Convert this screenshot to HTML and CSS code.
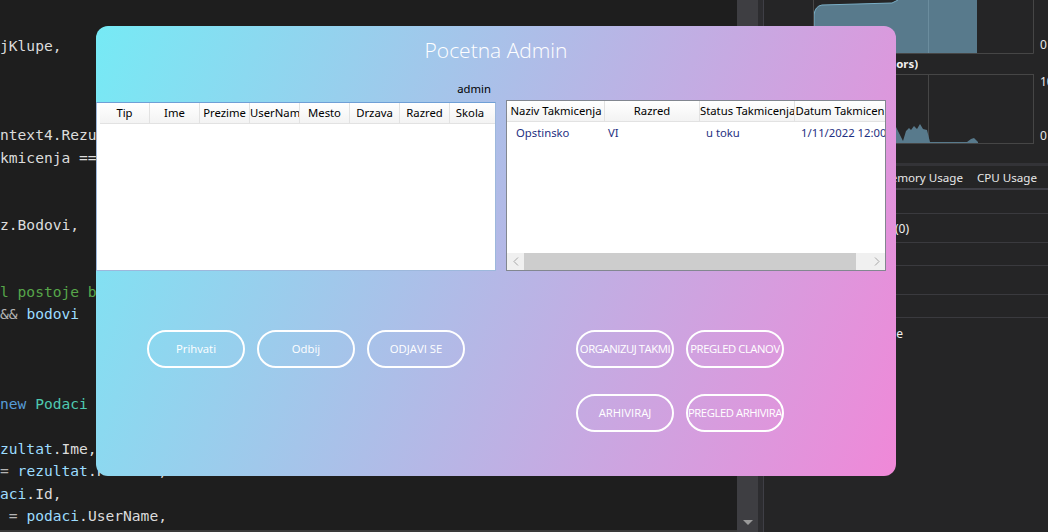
FILE: index.html
```html
<!DOCTYPE html>
<html>
<head>
<meta charset="utf-8">
<link rel="stylesheet" href="styles.css">
</head>
<body>
<div class="editor">
<div class="ln">jKlupe,</div>
<div class="ln"> </div>
<div class="ln"> </div>
<div class="ln"> </div>
<div class="ln">ntext4.Rezultati</div>
<div class="ln">kmicenja == </div>
<div class="ln"> </div>
<div class="ln"> </div>
<div class="ln">z.Bodovi,</div>
<div class="ln"> </div>
<div class="ln"> </div>
<div class="ln cm">l postoje bodovi</div>
<div class="ln"><span class="op">&amp;&amp;</span> <span class="var">bodovi</span></div>
<div class="ln"> </div>
<div class="ln"> </div>
<div class="ln"> </div>
<div class="ln"><span class="kw">new</span> <span class="ty">Podaci</span></div>
<div class="ln"> </div>
<div class="ln"><span class="var">zultat</span>.Ime,</div>
<div class="ln"><span class="op">=</span> <span class="var">rezultat</span>.Prezime,</div>
<div class="ln"><span class="var">aci</span>.Id,</div>
<div class="ln"> <span class="op">=</span> <span class="var">podaci</span>.UserName,</div>
</div>
<div class="vscroll"><span class="arrow"></span></div>
<div class="gutter"></div>
<div class="panel">
  <svg class="g1" width="284" height="54" viewBox="0 0 284 54">
    <path d="M50,53 L50,15 Q51,6 58,5 L128,3 L134,0 L213,0 L213,53 Z" fill="#587a8c"/>
    <path d="M50,53 L50,15 Q51,6 58,5 L128,3 L134,0" fill="none" stroke="#79aec6" stroke-width="1"/>
    <line x1="164.5" y1="0" x2="164.5" y2="53" stroke="#6b8d9e"/>
    <path d="M49.5,0 L49.5,53.5 L269.5,53.5 L269.5,0" fill="none" stroke="#464646"/>
  </svg>
  <span class="axis a1">0</span>
  <div class="cap">CPU (% of all processors)</div>
  <div class="g2wrap">
    <svg class="g2" width="284" height="70" viewBox="0 0 284 70">
      <rect x="49.5" y="0.5" width="220" height="69" fill="none" stroke="#464646"/>
      <line x1="164.5" y1="1" x2="164.5" y2="69" stroke="#464646"/>
      <path d="M50,69 L50,60 L120,55 L132,53 L139,67 L142,57 L145,54 L147,56 L150,52 L153,55 L156,50 L159,55 L163,56 L166,68 L203,68 L207,65 L210,64 L214,68 L214,69 Z" fill="#587a8c"/>
    </svg>
    <span class="axis a2">100</span>
    <span class="axis a3">0</span>
  </div>
  <div class="sep"></div>
  <div class="tabs"><span class="tab1">Memory Usage</span><span>CPU Usage</span></div>
  <div class="tabline"></div>
  <div class="prow h24"></div>
  <div class="prow h29"><span class="rtxt">Events (0)</span></div>
  <div class="prow h23"></div>
  <div class="prow h29"></div>
  <div class="prow h23"></div>
  <div class="prow h30 last"><span class="rtxt r2">Name</span></div>
</div>

<div class="dialog">
  <div class="title">Pocetna Admin</div>
  <div class="user">admin</div>
  <div class="tables">
    <div class="lt">
      <div class="lhdr">
        <div class="hc">Tip</div>
        <div class="hc">Ime</div>
        <div class="hc">Prezime</div>
        <div class="hc">UserNam</div>
        <div class="hc">Mesto</div>
        <div class="hc">Drzava</div>
        <div class="hc">Razred</div>
        <div class="hc last">Skola</div>
      </div>
    </div>
    <div class="rt">
      <div class="rhdr">
        <div class="hc c1">Naziv Takmicenja</div>
        <div class="hc c2">Razred</div>
        <div class="hc c3">Status Takmicenja</div>
        <div class="hc c4 last">Datum Takmicen</div>
      </div>
      <div class="row">
        <div class="dc c1 p1">Opstinsko</div>
        <div class="dc c2 p2">VI</div>
        <div class="dc c3 p3">u toku</div>
        <div class="dc c4 p3">1/11/2022 12:00</div>
      </div>
      <div class="fill"></div>
      <div class="hscroll">
        <div class="sarr"><svg width="6" height="9" viewBox="0 0 6 9"><polyline points="5,0.5 1,4.5 5,8.5" fill="none" stroke="#a6a6a6" stroke-width="1"/></svg></div>
        <div class="thumb"></div>
        <div class="track"></div>
        <div class="sarr"><svg width="6" height="9" viewBox="0 0 6 9"><polyline points="1,0.5 5,4.5 1,8.5" fill="none" stroke="#a6a6a6" stroke-width="1"/></svg></div>
      </div>
    </div>
  </div>
  <div class="btns">
    <div class="brow">
      <div class="btn">Prihvati</div>
      <div class="btn">Odbij</div>
      <div class="btn">ODJAVI SE</div>
      <div class="btn gapr tight">ORGANIZUJ TAKMI</div>
      <div class="btn tight">PREGLED CLANOV</div>
    </div>
    <div class="brow brow2">
      <div class="btn">ARHIVIRAJ</div>
      <div class="btn tight">PREGLED ARHIVIRA</div>
    </div>
  </div>
</div>
</body>
</html>
```
FILE: styles.css
```css
* { box-sizing: border-box; margin: 0; padding: 0; }
html, body { width: 1048px; height: 532px; overflow: hidden; }
body {
  background: #1e1e1e;
  display: flex;
  position: relative;
  font-family: "Noto Sans", sans-serif;
}

/* code editor */
.editor {
  width: 737px;
  height: 532px;
  padding-top: 34.8px;
  font-family: "DejaVu Sans Mono", monospace;
  font-size: 14.6px;
  color: #dcdcdc;
  overflow: hidden;
  box-shadow: inset 0 -2px 0 #3a3a3a;
}
.ln { height: 22.4px; line-height: 22.4px; white-space: pre; }
.cm { color: #57a64a; }
.op { color: #b4b4b4; }
.var { color: #9cdcfe; }
.kw { color: #569cd6; }
.ty { color: #4ec9b0; }

.vscroll {
  width: 21px;
  background: #3e3e42;
  display: flex;
  flex-direction: column;
  justify-content: flex-end;
  align-items: center;
  padding-bottom: 7px;
}
.arrow {
  width: 0; height: 0;
  border-left: 5px solid transparent;
  border-right: 5px solid transparent;
  border-top: 5px solid #9a9a9a;
}
.gutter {
  width: 6px;
  background: #2d2d30;
  border-right: 1px solid #3f3f46;
}

/* diagnostics panel */
.panel {
  flex: 1;
  background: #252526;
  display: flex;
  flex-direction: column;
  color: #f1f1f1;
  font-family: "Noto Sans", sans-serif;
  font-size: 12px;
  overflow: hidden;
  position: relative;
}
.g1 { display: block; flex: none; }
.axis { position: absolute; left: 276px; font-size: 12px; line-height: 14px; color: #e8e8e8; }
.a1 { top: 38px; }
.cap {
  width: 154px;
  height: 20px;
  line-height: 20px;
  text-align: right;
  font-weight: bold;
  font-size: 11.4px;
  white-space: nowrap;
  overflow: hidden;
  flex: none;
}
.g2wrap { position: relative; height: 70px; flex: none; }
.g2 { display: block; }
.a2 { top: 1px; }
.a3 { top: 55px; }
.sep { margin-top: 19px; height: 3px; background: #333337; flex: none; }
.tabs { height: 22px; display: flex; align-items: center; gap: 14px; white-space: nowrap; flex: none; color: #e8e8e8; font-size: 11.6px; }
.tab1 { width: 199px; text-align: right; }
.tabline { height: 2px; background: #3f3f46; flex: none; }
.prow { border-bottom: 1px solid #3a3a3e; flex: none; display: flex; align-items: center; }
.prow.last { border-bottom: none; }
.h24 { height: 24px; }
.h29 { height: 29px; }
.h23 { height: 23px; }
.h30 { height: 30px; }
.rtxt { width: 145px; text-align: right; white-space: nowrap; color: #f1f1f1; }
.rtxt.r2 { width: 139px; }

/* dialog window */
.dialog {
  position: absolute;
  left: 96px;
  top: 26px;
  width: 800px;
  height: 450px;
  border-radius: 12px;
  background: linear-gradient(112deg, #76eaf5 0%, #f088d8 100%);
  display: flex;
  flex-direction: column;
  overflow: hidden;
}
.title {
  margin-top: 12px;
  height: 24px;
  line-height: 24px;
  text-align: center;
  color: #fff;
  font-family: "Open Sans", sans-serif;
  font-weight: 300;
  font-size: 21px;
}
.user {
  margin-top: 19px;
  width: 400px;
  height: 16px;
  line-height: 16px;
  text-align: right;
  padding-right: 5px;
  font-size: 11.3px;
  color: #000;
}
.tables { display: flex; align-items: flex-start; }
.lt {
  width: 400px;
  height: 169px;
  margin-top: 5px;
  background: #fff;
  border: 1px solid #9db8dc;
  border-top-color: #6f9fd6;
  padding-left: 3px;
}
.lhdr, .rhdr {
  display: flex;
  height: 21px;
  background: linear-gradient(#ffffff, #f3f3f3);
  border-bottom: 1px solid #e2e2e2;
}
.hc {
  flex: none;
  width: 50px;
  height: 20px;
  line-height: 20px;
  font-size: 11.3px;
  color: #000;
  text-align: center;
  white-space: nowrap;
  overflow: hidden;
  border-right: 1px solid #e2e2e2;
}
.lhdr .hc.last { width: 40px; border-right: none; }
.rt {
  width: 380px;
  height: 171px;
  margin-top: 3px;
  margin-left: 10px;
  background: #fff;
  border: 1px solid #828790;
  display: flex;
  flex-direction: column;
}
.rhdr { padding-left: 1px; }
.c1 { width: 97px; }
.c2 { width: 95px; }
.c3 { width: 95px; }
.c4 { width: 90px; }
.hc.last { border-right: none; }
.row { display: flex; height: 22px; flex: none; padding-left: 1px; }
.dc {
  flex: none;
  line-height: 22px;
  font-size: 11.3px;
  color: #1f3182;
  white-space: nowrap;
  overflow: hidden;
}
.p1 { padding-left: 8px; }
.p2 { padding-left: 3px; }
.p3 { padding-left: 6px; }
.fill { flex: 1; }
.hscroll { height: 17px; display: flex; background: #f0f0f0; flex: none; }
.sarr { width: 17px; display: flex; align-items: center; justify-content: center; flex: none; }
.thumb { width: 332px; background: #cdcdcd; flex: none; }
.track { flex: 1; }

.btns { margin-top: 59px; display: flex; flex-direction: column; gap: 26px; }
.brow { display: flex; gap: 12px; padding-left: 51px; }
.brow2 { padding-left: 480px; }
.btn {
  flex: none;
  width: 98px;
  height: 38px;
  border: 2px solid #fff;
  border-radius: 19px;
  color: #fff;
  font-family: "Open Sans", sans-serif;
  font-weight: 400;
  font-size: 11.3px;
  line-height: 34px;
  text-align: center;
  white-space: nowrap;
  overflow: hidden;
}
.btn.tight { letter-spacing: -0.45px; }
.gapr { margin-left: 99px; }
```
